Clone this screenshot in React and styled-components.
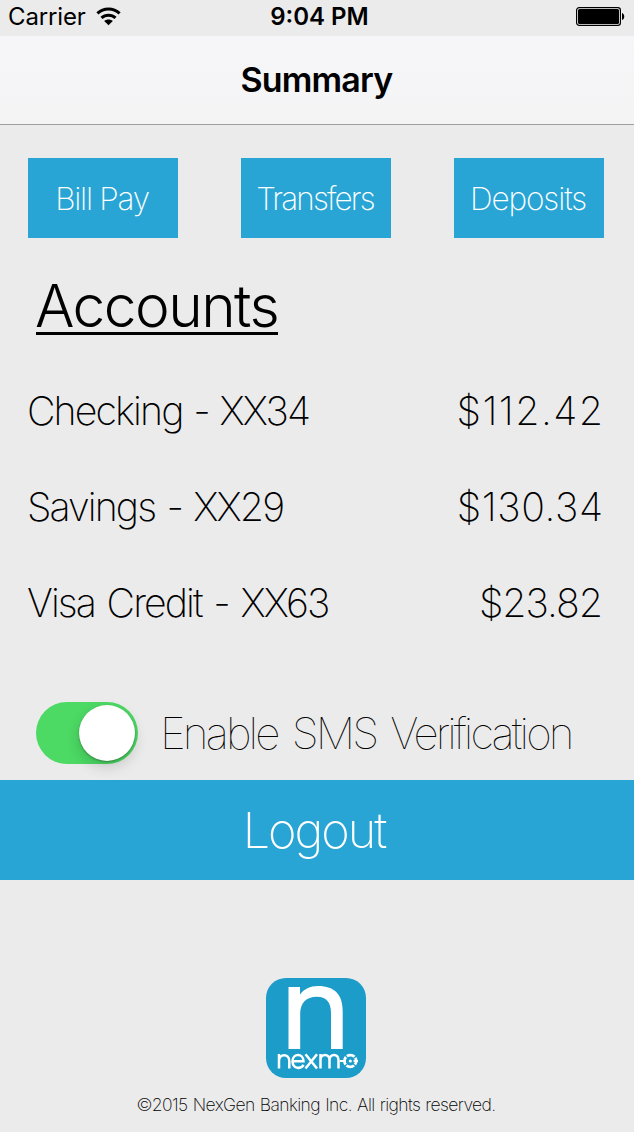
import React from "react";
import styled, { createGlobalStyle } from "styled-components";

const Global = createGlobalStyle`
  * { box-sizing: border-box; }
  body { margin: 0; background: #ebebeb; font-family: Inter, "Liberation Sans", sans-serif; color: #000; }
`;

const Screen = styled.div`
  width: 634px;
  height: 1132px;
  display: flex;
  flex-direction: column;
  background: #ebebeb;
  overflow: hidden;
  white-space: nowrap;
`;

const StatusBar = styled.div`
  height: 36px;
  padding: 0 9px 3px 8px;
  display: grid;
  grid-template-columns: 1fr auto 1fr;
  align-items: center;
  font-size: 24px;
`;

const Carrier = styled.div`
  display: flex;
  align-items: center;
  gap: 10px;
  letter-spacing: -0.15px;
`;

const Clock = styled.div`
  padding-left: 6px;
  font-weight: 600;
`;

const BatteryIcon = styled.svg`
  justify-self: end;
`;

const NavBar = styled.header`
  height: 89px;
  display: flex;
  justify-content: center;
  background: linear-gradient(#f6f6f8, #f4f4f5);
  border-bottom: 1px solid #a0a0a1;
`;

const Title = styled.h1`
  margin: 0;
  padding-right: 1px;
  font-size: 34px;
  line-height: 88px;
  font-weight: 600;
  letter-spacing: -0.85px;
`;

const Actions = styled.nav`
  display: flex;
  justify-content: space-between;
  padding: 33px 30px 0 28px;
`;

const ActionButton = styled.button`
  width: 150px;
  height: 80px;
  padding: 1px 2px 0 0;
  border: 0;
  background: #28a5d5;
  color: #fff;
  font: 200 31.5px/80px Inter, sans-serif;
  letter-spacing: ${(p) => p.$spacing}px;
`;

const Heading = styled.h2`
  align-self: flex-start;
  margin: 31px 0 0 36px;
  height: 66px;
  border-bottom: 3px solid #000;
  font-size: 58.6px;
  font-weight: 300;
  line-height: 73px;
  letter-spacing: -1.55px;
  text-indent: -1px;
`;

const AccountList = styled.div`
  padding: 28px 31px 0 27px;
`;

const AccountRow = styled.div`
  display: flex;
  justify-content: space-between;
  height: 96px;
  font-size: 39.3px;
  font-weight: 200;
  line-height: 96px;
`;

const AccountName = styled.span`
  letter-spacing: -1.9px;
  word-spacing: ${(p) => p.$gap}px;
`;

const Amount = styled.span`
  letter-spacing: ${(p) => p.$spacing}px;
  margin-right: ${(p) => -p.$spacing}px;
`;

const Setting = styled.div`
  display: flex;
  align-items: center;
  gap: 22px;
  height: 129px;
  padding: 35px 0 0 36px;
`;

const Toggle = styled.div`
  width: 102px;
  height: 62px;
  padding: 3px;
  display: flex;
  justify-content: flex-end;
  border-radius: 31px;
  background: #4cd964;
`;

const Knob = styled.div`
  width: 56px;
  height: 56px;
  border-radius: 50%;
  background: #fff;
  box-shadow: 0 1px 2px rgba(0, 0, 0, 0.3), 0 6px 14px rgba(0, 0, 0, 0.16);
`;

const SettingLabel = styled.span`
  font-size: 44px;
  font-weight: 100;
  letter-spacing: -2.87px;
  word-spacing: 4.6px;
`;

const Logout = styled.button`
  flex: none;
  height: 100px;
  padding: 1px 6px 0 0;
  border: 0;
  background: #28a5d5;
  color: #fff;
  font: 200 48.6px/99px Inter, sans-serif;
  letter-spacing: -2px;
`;

const Footer = styled.footer`
  display: flex;
  flex-direction: column;
  align-items: center;
  padding: 98px 2px 0 0;
`;

const Copyright = styled.p`
  margin: 12px 0 0;
  font-size: 17.5px;
  font-weight: 200;
  line-height: 30px;
  letter-spacing: -0.58px;
  word-spacing: 0.75px;
`;

const actions = [
  { label: "Bill Pay", spacing: -1.25 },
  { label: "Transfers", spacing: -1.85 },
  { label: "Deposits", spacing: -1.1 },
];

const accounts = [
  { name: "Checking - XX34", amount: "$112.42", gap: 1.5, spacing: 1.45 },
  { name: "Savings - XX29", amount: "$130.34", gap: 2.1, spacing: 0.6 },
  { name: "Visa Credit - XX63", amount: "$23.82", gap: 2.4, spacing: -1 },
];

const WifiIcon = () => (
  <svg width="26" height="19" viewBox="0 0 26 19">
    <g fill="none" stroke="#000" strokeWidth="3">
      <path d="M1.400 6.400C7.600 .4 17.400 .4 23.600 6.400" />
      <path d="M5.500 10.900C9.400 7.200 15.600 7.200 19.500 10.900" />
    </g>
    <path d="M12.500 18.200l-4.300-4.300c2.400-2 6.200-2 8.600 0z" />
  </svg>
);

const Battery = () => (
  <BatteryIcon width="49" height="19" viewBox="0 0 49 19">
    <rect x=".6" y=".6" width="43.8" height="17.8" rx="2.6" fill="#f7f7f7" stroke="#000" strokeWidth="1.2" />
    <rect x="2" y="2" width="41" height="15" rx="1.5" />
    <path d="M46 6c3 1 3 6 0 7z" />
  </BatteryIcon>
);

const Logo = () => (
  <svg width="100" height="100" viewBox="0 0 100 100">
    <rect width="100" height="100" rx="20" fill="#1b9cc9" />
    <path d="M22.500 71V9H34V16.500C38 11 44 8 52 8C69 8 76.700 17 76.700 33V71H65V35C65 24 60 18.700 51 18.700C40 18.700 34.200 25 34.200 36V71Z" fill="#fff" />
    <g fill="none" stroke="#fff" strokeWidth="2.500">
      <path d="M13 90.500V76M13 83C13 75.200 23.300 75.200 23.300 83V90.500" />
      <path d="M26.700 83.300H37.500C37.500 75 26.500 75 26.500 83.300C26.500 91.300 35.500 91.300 37.500 86.800" />
      <path d="M39.500 76.200L51 90.500M51 76.200L39.500 90.500" />
      <path d="M54.500 90.500V76M54.500 82C54.500 75.200 63.500 75.200 63.500 82V90.500M63.500 82C63.500 75.200 72.500 75.200 72.500 82V90.500" />
      <circle cx="84.300" cy="83" r="5.900" strokeWidth="2.800" strokeDasharray="8.100 1.167" strokeDashoffset="-5" />
      <path d="M74 83h6M87.500 83h4.500" strokeWidth="2" />
    </g>
    <circle cx="84.300" cy="83" r="1.600" fill="#fff" />
  </svg>
);

export default function App() {
  return (
    <Screen>
      <Global />
      <StatusBar>
        <Carrier>
          Carrier
          <WifiIcon />
        </Carrier>
        <Clock>9:04 PM</Clock>
        <Battery />
      </StatusBar>
      <NavBar>
        <Title>Summary</Title>
      </NavBar>
      <Actions>
        {actions.map((a) => (
          <ActionButton key={a.label} $spacing={a.spacing}>
            {a.label}
          </ActionButton>
        ))}
      </Actions>
      <Heading>Accounts</Heading>
      <AccountList>
        {accounts.map((a) => (
          <AccountRow key={a.name}>
            <AccountName $gap={a.gap}>{a.name}</AccountName>
            <Amount $spacing={a.spacing}>{a.amount}</Amount>
          </AccountRow>
        ))}
      </AccountList>
      <Setting>
        <Toggle>
          <Knob />
        </Toggle>
        <SettingLabel>Enable SMS Verification</SettingLabel>
      </Setting>
      <Logout>Logout</Logout>
      <Footer>
        <Logo />
        <Copyright>©2015 NexGen Banking Inc. All rights reserved.</Copyright>
      </Footer>
    </Screen>
  );
}
